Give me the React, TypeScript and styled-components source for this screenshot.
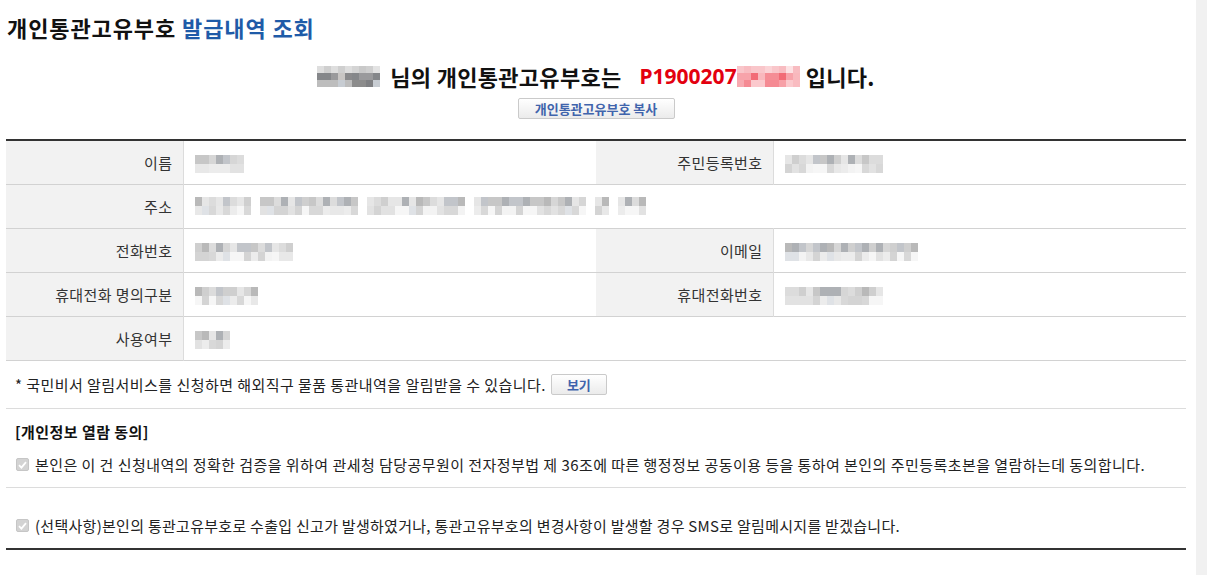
import React from "react";
import styled, { createGlobalStyle } from "styled-components";

const GlobalStyle = createGlobalStyle`
  html, body { margin: 0; padding: 0; background: #fff; }
  body {
    font-family: "Malgun Gothic", "Noto Sans CJK KR", "Noto Sans", sans-serif;
    color: #333;
  }
  * { box-sizing: border-box; }
`;

const Shell = styled.div`
  display: flex;
  width: 1207px;
  height: 575px;
  overflow: hidden;
`;

const Main = styled.div`
  flex: 1;
  padding: 0 10px 0 6px;
`;

const ScrollTrack = styled.div`
  width: 11px;
  background: #f1f1f1;
`;

const Title = styled.h1`
  margin: 0;
  padding: 12px 0 0 1px;
  font-size: 22px;
  line-height: 30px;
  font-weight: 700;
  color: #111;
  letter-spacing: 0.9px;
`;

const TitleAccent = styled.span`
  color: #1f5ba8;
`;

const Summary = styled.div`
  margin-top: 19px;
  display: flex;
  justify-content: center;
  align-items: center;
  font-size: 22px;
  line-height: 30px;
  font-weight: 700;
  color: #111;
`;

const SummaryText = styled.span<{ $gapLeft?: number }>`
  margin-left: ${(p) => p.$gapLeft ?? 0}px;
  letter-spacing: 0.3px;
`;

const Code = styled.span`
  color: #e3000f;
  font-family: "Noto Sans", "Malgun Gothic", sans-serif;
  font-weight: 700;
  font-size: 21px;
  margin-left: 18px;
`;

const CopyRow = styled.div`
  display: flex;
  justify-content: center;
  margin-top: 7px;
`;

const SmallButton = styled.button<{ $w: number }>`
  width: ${(p) => p.$w}px;
  height: 21px;
  padding: 0;
  border: 1px solid #cacaca;
  border-radius: 2px;
  background: linear-gradient(#ffffff, #ebebeb);
  color: #4064ac;
  font-family: "Malgun Gothic", "Noto Sans CJK KR", sans-serif;
  font-size: 13px;
  font-weight: 700;
  line-height: 19px;
  cursor: pointer;
`;

const Table = styled.table`
  width: 100%;
  margin-top: 20px;
  border-collapse: collapse;
  table-layout: fixed;
  border-top: 2px solid #333;
  font-size: 15px;
  letter-spacing: 0.4px;
`;

const Row = styled.tr`
  border-bottom: 1px solid #d2d2d2;
`;

const Label = styled.th`
  height: 44px;
  padding: 0 10px 0 0;
  background: #f2f2f2;
  border-right: 1px solid #dcdcdc;
  text-align: right;
  font-weight: 400;
  color: #333;
  white-space: nowrap;
`;

const Value = styled.td`
  height: 44px;
  padding: 0 0 0 11px;
  vertical-align: middle;
`;

const ValueLine = styled.div`
  display: flex;
  align-items: center;
  gap: 9px;
`;

const MosaicGrid = styled.span<{ $cols: number; $cw: number; $ch: number }>`
  display: inline-grid;
  grid-template-columns: repeat(${(p) => p.$cols}, ${(p) => p.$cw}px);
  grid-auto-rows: ${(p) => p.$ch}px;
  vertical-align: middle;
`;

const Notice = styled.div`
  display: flex;
  align-items: center;
  height: 48px;
  padding-left: 9px;
  border-bottom: 1px solid #dcdcdc;
  font-size: 15px;
  letter-spacing: 0.45px;
  color: #222;
`;

const NoticeButton = styled(SmallButton)`
  margin-left: 5px;
  letter-spacing: 0;
`;

const Consent = styled.div<{ $top: number; $bottom: number; $last?: boolean }>`
  padding: ${(p) => p.$top}px 9px ${(p) => p.$bottom}px 9px;
  border-bottom: ${(p) => (p.$last ? "2px solid #333" : "1px solid #dcdcdc")};
  font-size: 15px;
  letter-spacing: 0.45px;
  color: #222;
`;

const ConsentTitle = styled.div`
  font-weight: 700;
  line-height: 24px;
  color: #111;
`;

const CheckLine = styled.label<{ $mt?: number; $ls?: number }>`
  display: flex;
  align-items: center;
  gap: 6px;
  margin-top: ${(p) => p.$mt ?? 0}px;
  line-height: 24px;
  padding-left: 1px;
  letter-spacing: ${(p) => p.$ls ?? 0.45}px;
`;

const FakeCheck = styled.span`
  width: 13px;
  height: 13px;
  flex: none;
  border: 1px solid #c6c6c6;
  border-radius: 2px;
  background: #d3d3d3;
  display: flex;
  align-items: center;
  justify-content: center;
`;

function hash(n: number): number {
  let x = Math.imul(n | 0, 2654435761 | 0) >>> 0;
  x = (x ^ (x >>> 13)) >>> 0;
  x = Math.imul(x, 1274126177) >>> 0;
  x = (x ^ (x >>> 16)) >>> 0;
  return x;
}

const palettes: Record<string, string[][]> = {
  gray: [
    ["#dcdcdc", "#c7c7c7", "#b9b9b9", "#d6d6d6", "#aeb1b5", "#e6e6e6", "#c2c5ca", "#cfcfcf"],
    ["#ececec", "#e2e2e2", "#d8d8d8", "#f3f3f3", "#dfe2e6", "#e8e8e8", "#d4d4d4", "#f6f6f6"],
  ],
  dark: [
    ["#dedede", "#d4d4d4", "#c9c9c9", "#e3e3e3", "#d8d8d8", "#cfcfcf"],
    ["#d6d0cc", "#c9c6c4", "#8a8a8c", "#6e7074", "#9a9a9c", "#85878a"],
    ["#dcd3cc", "#8c8c8c", "#c7ccd2", "#969696", "#bdbdbd", "#7f8083"],
  ],
  red: [
    ["#fbd3d6", "#f8bcc1", "#fde2e4", "#f9c6ca", "#fbdadd"],
    ["#f58d95", "#f26b76", "#f7a3aa", "#f47b85", "#f9b8bd"],
    ["#f8a9b0", "#f58a93", "#fbc9cd", "#f7a0a7", "#f9bcc1"],
  ],
};

function Mosaic({
  cols,
  rows = 2,
  cw = 7,
  ch = 9,
  seed,
  tone = "gray",
}: {
  cols: number;
  rows?: number;
  cw?: number;
  ch?: number;
  seed: number;
  tone?: string;
}) {
  const pal = palettes[tone];
  const cells = [];
  for (let r = 0; r < rows; r++) {
    const row = pal[Math.min(r, pal.length - 1)];
    for (let c = 0; c < cols; c++) {
      const color = row[hash(seed * 131 + r * 37 + c * 7 + 1) % row.length];
      cells.push(<span key={`${r}-${c}`} style={{ background: color }} />);
    }
  }
  return (
    <MosaicGrid $cols={cols} $cw={cw} $ch={ch} aria-hidden>
      {cells}
    </MosaicGrid>
  );
}

const Check = () => (
  <FakeCheck>
    <svg width="9" height="8" viewBox="0 0 9 8">
      <path d="M1 4.2 L3.4 6.6 L8 1.2" fill="none" stroke="#fff" strokeWidth="1.8" />
    </svg>
  </FakeCheck>
);

export default function App() {
  return (
    <>
      <GlobalStyle />
      <Shell>
        <Main>
          <Title>
            개인통관고유부호 <TitleAccent>발급내역 조회</TitleAccent>
          </Title>

          <Summary>
            <Mosaic cols={9} rows={3} cw={7} ch={7} seed={3} tone="dark" />
            <SummaryText $gapLeft={10}>님의 개인통관고유부호는</SummaryText>
            <Code>P1900207</Code>
            <Mosaic cols={9} rows={3} cw={7} ch={7} seed={11} tone="red" />
            <SummaryText $gapLeft={6}>입니다.</SummaryText>
          </Summary>

          <CopyRow>
            <SmallButton $w={157}>개인통관고유부호 복사</SmallButton>
          </CopyRow>

          <Table>
            <colgroup>
              <col style={{ width: "15%" }} />
              <col style={{ width: "35%" }} />
              <col style={{ width: "15%" }} />
              <col style={{ width: "35%" }} />
            </colgroup>
            <tbody>
              <Row>
                <Label>이름</Label>
                <Value>
                  <Mosaic cols={7} seed={21} />
                </Value>
                <Label>주민등록번호</Label>
                <Value>
                  <Mosaic cols={14} seed={22} />
                </Value>
              </Row>
              <Row>
                <Label>주소</Label>
                <Value colSpan={3}>
                  <ValueLine>
                    <Mosaic cols={8} seed={31} />
                    <Mosaic cols={14} seed={32} />
                    <Mosaic cols={14} seed={33} />
                    <Mosaic cols={16} seed={34} />
                    <Mosaic cols={2} seed={35} />
                    <Mosaic cols={4} seed={36} />
                  </ValueLine>
                </Value>
              </Row>
              <Row>
                <Label>전화번호</Label>
                <Value>
                  <Mosaic cols={14} seed={41} />
                </Value>
                <Label>이메일</Label>
                <Value>
                  <Mosaic cols={19} seed={42} />
                </Value>
              </Row>
              <Row>
                <Label>휴대전화 명의구분</Label>
                <Value>
                  <Mosaic cols={9} seed={51} />
                </Value>
                <Label>휴대전화번호</Label>
                <Value>
                  <Mosaic cols={14} seed={52} />
                </Value>
              </Row>
              <Row>
                <Label>사용여부</Label>
                <Value colSpan={3}>
                  <Mosaic cols={5} seed={61} />
                </Value>
              </Row>
            </tbody>
          </Table>

          <Notice>
            * 국민비서 알림서비스를 신청하면 해외직구 물품 통관내역을 알림받을 수 있습니다.
            <NoticeButton $w={56}>보기</NoticeButton>
          </Notice>

          <Consent $top={11} $bottom={10}>
            <ConsentTitle>[개인정보 열람 동의]</ConsentTitle>
            <CheckLine $mt={9}>
              <Check />
              본인은 이 건 신청내역의 정확한 검증을 위하여 관세청 담당공무원이 전자정부법 제 36조에 따른 행정정보 공동이용 등을 통하여 본인의 주민등록초본을 열람하는데 동의합니다.
            </CheckLine>
          </Consent>

          <Consent $top={26} $bottom={10} $last>
            <CheckLine $ls={0.28}>
              <Check />
              (선택사항)본인의 통관고유부호로 수출입 신고가 발생하였거나, 통관고유부호의 변경사항이 발생할 경우 SMS로 알림메시지를 받겠습니다.
            </CheckLine>
          </Consent>
        </Main>
        <ScrollTrack />
      </Shell>
    </>
  );
}
